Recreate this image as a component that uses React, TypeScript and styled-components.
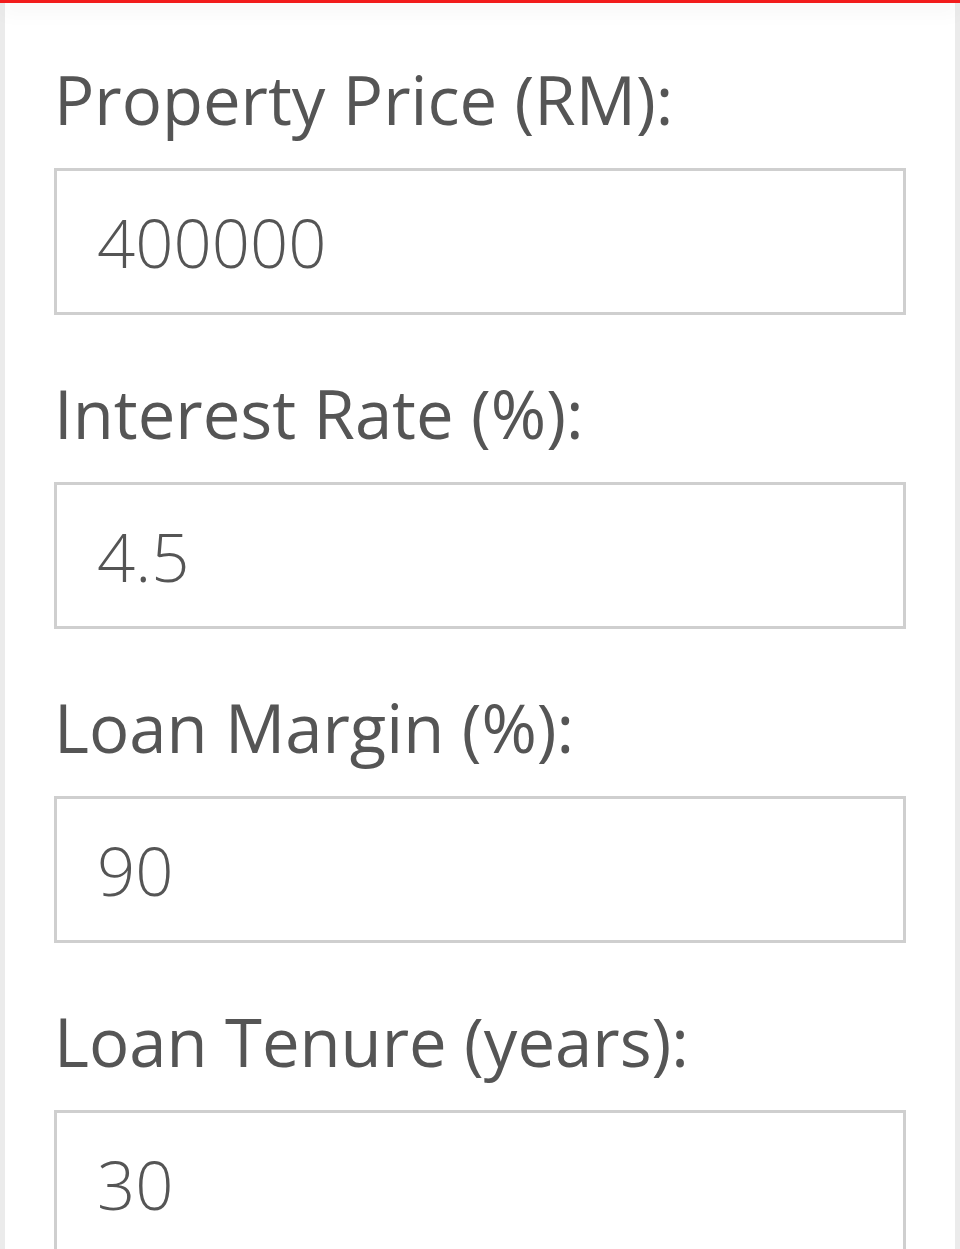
import styled, { createGlobalStyle } from "styled-components";

const GlobalStyle = createGlobalStyle`
  html, body {
    margin: 0;
    padding: 0;
    background: #ebebeb;
    font-family: "Open Sans", "Liberation Sans", sans-serif;
  }
`;

const Page = styled.div`
  min-height: 1249px;
  display: flex;
  flex-direction: column;
  overflow: hidden;
`;

const TopBar = styled.div`
  height: 3px;
  background: #f21c1c;
  position: relative;
  z-index: 2;
  box-shadow: 0 5px 20px rgba(0, 0, 0, 0.15);
`;

const Panel = styled.main`
  flex: 1;
  margin: 0 5px;
  background: #fff;
  padding: 63px 49px 0 49px;
  display: flex;
  flex-direction: column;
`;

const Field = styled.div`
  display: flex;
  flex-direction: column;
  margin-bottom: 65px;
`;

const Label = styled.label`
  font-size: 67px;
  line-height: 67px;
  color: #555;
  margin-bottom: 35px;
  white-space: nowrap;
`;

const Input = styled.input`
  box-sizing: border-box;
  width: 852px;
  height: 147px;
  border: 3px solid #cfcfcf;
  padding: 0 0 0 40px;
  font-family: "Open Sans", "Liberation Sans", sans-serif;
  font-weight: 300;
  font-size: 67px;
  color: #555;
  background: #fff;
  outline: none;
`;

const fields = [
  { label: "Property Price (RM):", value: "400000" },
  { label: "Interest Rate (%):", value: "4.5" },
  { label: "Loan Margin (%):", value: "90" },
  { label: "Loan Tenure (years):", value: "30" },
];

export default function App() {
  return (
    <Page>
      <GlobalStyle />
      <TopBar />
      <Panel>
        {fields.map((f) => (
          <Field key={f.label}>
            <Label>{f.label}</Label>
            <Input type="text" defaultValue={f.value} />
          </Field>
        ))}
      </Panel>
    </Page>
  );
}
